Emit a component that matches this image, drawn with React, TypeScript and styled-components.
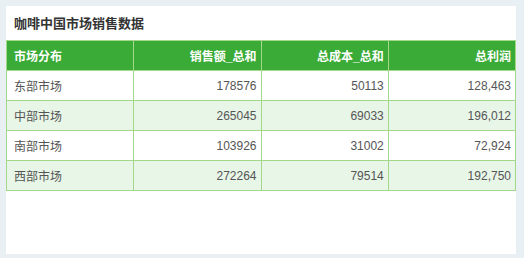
import React from 'react';
import styled, { createGlobalStyle } from 'styled-components';

const GlobalStyle = createGlobalStyle`
  html, body {
    margin: 0;
    padding: 0;
    background: #e9f0f4;
  }
  body {
    font-family: "Liberation Sans", "Noto Sans CJK SC", sans-serif;
  }
`;

const Page = styled.div`
  width: 524px;
  height: 258px;
  box-sizing: border-box;
  padding: 6px 8px 4px 6px;
`;

const Panel = styled.div`
  background: #fff;
  height: 248px;
  display: flex;
  flex-direction: column;
`;

const Title = styled.div`
  height: 34px;
  padding-left: 8px;
  padding-top: 7px;
  box-sizing: border-box;
  font-size: 13px;
  font-weight: bold;
  color: #333;
`;

const Table = styled.table`
  width: 100%;
  border-collapse: collapse;
  table-layout: fixed;
  font-size: 12px;
`;

const HeadCell = styled.th<{ $align: 'left' | 'right' }>`
  height: 30px;
  padding: 0 4px 0 7px;
  box-sizing: border-box;
  background: #3aab36;
  color: #fff;
  font-weight: bold;
  text-align: ${(p) => p.$align};
  border: 1px solid #a3d88b;
`;

const Row = styled.tr<{ $striped: boolean }>`
  background: ${(p) => (p.$striped ? '#e8f6e8' : '#fff')};
`;

const Cell = styled.td<{ $align: 'left' | 'right' }>`
  height: 30px;
  padding: 0 4px 0 7px;
  box-sizing: border-box;
  color: #555;
  text-align: ${(p) => p.$align};
  border: 1px solid #a3d88b;
`;

const columns = ['市场分布', '销售额_总和', '总成本_总和', '总利润'];

const rows = [
  ['东部市场', '178576', '50113', '128,463'],
  ['中部市场', '265045', '69033', '196,012'],
  ['南部市场', '103926', '31002', '72,924'],
  ['西部市场', '272264', '79514', '192,750'],
];

const App = () => {
  return (
    <>
      <GlobalStyle />
      <Page>
        <Panel>
          <Title>咖啡中国市场销售数据</Title>
          <Table>
            <thead>
              <tr>
                {columns.map((c, i) => (
                  <HeadCell key={c} $align={i === 0 ? 'left' : 'right'}>
                    {c}
                  </HeadCell>
                ))}
              </tr>
            </thead>
            <tbody>
              {rows.map((r, ri) => (
                <Row key={r[0]} $striped={ri % 2 === 1}>
                  {r.map((v, i) => (
                    <Cell key={i} $align={i === 0 ? 'left' : 'right'}>
                      {v}
                    </Cell>
                  ))}
                </Row>
              ))}
            </tbody>
          </Table>
        </Panel>
      </Page>
    </>
  );
};

export default App;
